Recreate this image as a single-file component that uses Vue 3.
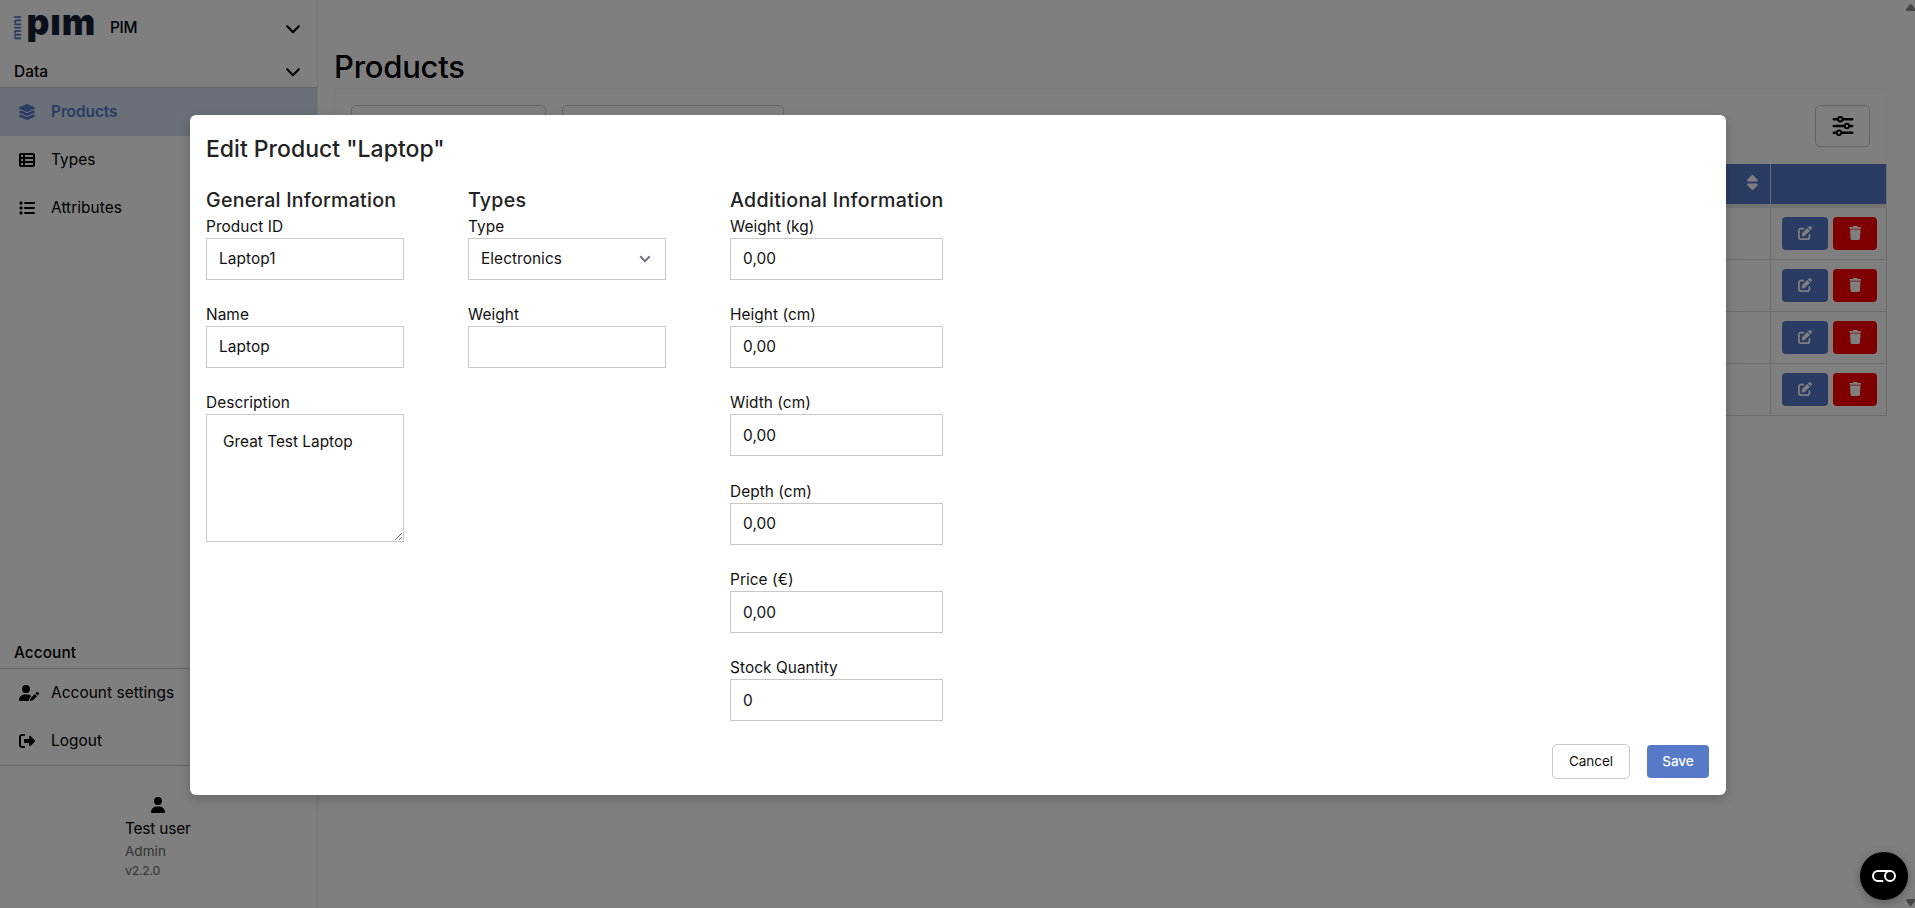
<script setup>
const icons = {
  layers: { box: '32 0 512 512', d: 'M264.5 5.2c14.9-6.9 32.1-6.9 47 0l218.6 101c8.5 3.9 13.9 12.4 13.9 21.8s-5.4 17.9-13.9 21.8l-218.6 101c-14.9 6.9-32.1 6.9-47 0L45.9 149.8C37.4 145.8 32 137.3 32 128s5.4-17.9 13.9-21.8L264.5 5.2zM476.9 209.6l53.2 24.6c8.5 3.9 13.9 12.4 13.9 21.8s-5.4 17.9-13.9 21.8l-218.6 101c-14.9 6.9-32.1 6.9-47 0L45.9 277.8C37.4 273.8 32 265.3 32 256s5.4-17.9 13.9-21.8l53.2-24.6 152 70.2c23.4 10.8 50.4 10.8 73.8 0l152-70.2zM476.9 337.6l53.2 24.6c8.5 3.9 13.9 12.4 13.9 21.8s-5.4 17.9-13.9 21.8l-218.6 101c-14.9 6.9-32.1 6.9-47 0L45.9 405.8C37.4 401.8 32 393.3 32 384s5.4-17.9 13.9-21.8l53.2-24.6 152 70.2c23.4 10.8 50.4 10.8 73.8 0l152-70.2z' },
  table: { box: '0 0 512 512', d: 'M0 96C0 60.7 28.7 32 64 32H448c35.3 0 64 28.7 64 64V416c0 35.3-28.7 64-64 64H64c-35.3 0-64-28.7-64-64V96zm64 0v64h64V96H64zm384 0H192v64H448V96zM64 224v64h64V224H64zm384 0H192v64H448V224zM64 352v64h64V352H64zm384 0H192v64H448V352z' },
  list: { box: '0 0 512 512', d: 'M40 48H88a24 24 0 0 1 24 24v48a24 24 0 0 1-24 24H40a24 24 0 0 1-24-24V72a24 24 0 0 1 24-24zM40 208H88a24 24 0 0 1 24 24v48a24 24 0 0 1-24 24H40a24 24 0 0 1-24-24v-48a24 24 0 0 1 24-24zM40 368H88a24 24 0 0 1 24 24v48a24 24 0 0 1-24 24H40a24 24 0 0 1-24-24v-48a24 24 0 0 1 24-24zM192 64H480a32 32 0 0 1 0 64H192a32 32 0 0 1 0-64zM192 224H480a32 32 0 0 1 0 64H192a32 32 0 0 1 0-64zM192 384H480a32 32 0 0 1 0 64H192a32 32 0 0 1 0-64z' },
  userPen: { box: '0 0 640 512', d: 'M224 256A128 128 0 1 0 224 0a128 128 0 1 0 0 256zm-45.7 48C79.8 304 0 383.8 0 482.3C0 498.7 13.3 512 29.7 512H322.8c-3.1-8.8-3.7-18.4-1.4-27.8l15-60.1c2.8-11.3 8.6-21.5 16.8-29.7l40.3-40.3c-32.1-31-75.7-50.1-123.9-50.1H178.3zm435.5-68.3c-15.6-15.6-40.9-15.6-56.6 0l-29.4 29.4 71 71 29.4-29.4c15.6-15.6 15.6-40.9 0-56.6l-14.4-14.4zM375.9 417c-4.1 4.1-7 9.2-8.4 14.9l-15 60.1c-1.4 5.5 .2 11.2 4.2 15.2s9.7 5.6 15.2 4.2l60.1-15c5.6-1.4 10.8-4.3 14.9-8.4L576.1 358.7l-71-71L375.9 417z' },
  logout: { box: '0 0 512 512', d: 'M377.9 105.9L500.7 228.7c7.2 7.2 11.3 17.1 11.3 27.3s-4.1 20.1-11.3 27.3L377.9 406.1c-6.4 6.4-15 9.9-24 9.9c-18.7 0-33.9-15.2-33.9-33.9l0-62.1-128 0c-17.7 0-32-14.3-32-32l0-64c0-17.7 14.3-32 32-32l128 0 0-62.1c0-18.7 15.2-33.9 33.9-33.9c9 0 17.6 3.6 24 9.9zM160 96L96 96c-17.7 0-32 14.3-32 32l0 256c0 17.7 14.3 32 32 32l64 0c17.7 0 32 14.3 32 32s-14.3 32-32 32l-64 0c-53 0-96-43-96-96L0 128C0 75 43 32 96 32l64 0c17.7 0 32 14.3 32 32s-14.3 32-32 32z' },
}
const dataNav = [
  { label: 'Products', icon: icons.layers, active: true },
  { label: 'Types', icon: icons.table },
  { label: 'Attributes', icon: icons.list },
]
const accountNav = [
  { label: 'Account settings', icon: icons.userPen, wide: true },
  { label: 'Logout', icon: icons.logout },
]
const measures = [
  { label: 'Weight (kg)', value: '0,00' },
  { label: 'Height (cm)', value: '0,00' },
  { label: 'Width (cm)', value: '0,00' },
  { label: 'Depth (cm)', value: '0,00' },
  { label: 'Price (€)', value: '0,00' },
  { label: 'Stock Quantity', value: '0' },
]
</script>

<template>
  <div class="page">
    <aside class="sidebar">
      <div class="brand">
        <span class="logo"><span class="mini">mını</span><span class="pim">pım</span></span>
        <span class="strong app-name">PIM</span>
        <svg class="chev" viewBox="0 0 14 9"><path d="M1.2 1.2 7 7.2 12.8 1.2" /></svg>
      </div>
      <div class="group">
        <span class="strong">Data</span>
        <svg class="chev" viewBox="0 0 14 9"><path d="M1.2 1.2 7 7.2 12.8 1.2" /></svg>
      </div>
      <nav>
        <a v-for="n in dataNav" :key="n.label" class="item" :class="{ active: n.active }">
          <svg class="ico" :viewBox="n.icon.box"><path :d="n.icon.d" /></svg><span>{{ n.label }}</span>
        </a>
      </nav>
      <div class="group account"><span class="strong">Account</span></div>
      <nav class="account-nav">
        <a v-for="n in accountNav" :key="n.label" class="item">
          <svg class="ico" :class="{ wide: n.wide }" :viewBox="n.icon.box"><path :d="n.icon.d" /></svg><span>{{ n.label }}</span>
        </a>
      </nav>
      <div class="user">
        <div class="user-box">
          <svg class="avatar" viewBox="0 0 448 512"><path d="M224 256A128 128 0 1 0 224 0a128 128 0 1 0 0 256zm-45.7 48C79.8 304 0 383.8 0 482.3C0 498.7 13.3 512 29.7 512H418.3c16.4 0 29.7-13.3 29.7-29.7C448 383.8 368.2 304 269.7 304H178.3z" /></svg>
          <span class="uname">Test user</span>
          <span class="role">Admin</span>
          <span class="ver">v2.2.0</span>
        </div>
      </div>
    </aside>

    <main class="main">
      <h1>Products</h1>
      <section class="card">
        <div class="filters">
          <div class="filter first"></div>
          <div class="filter second"></div>
          <button class="tune">
            <svg viewBox="0 0 22 20">
              <g fill="none" stroke="#000" stroke-width="2.6" stroke-linecap="round">
                <path d="M1.8 3.3H20.2M1.8 10H20.2M1.8 16.7H20.2" />
              </g>
              <g fill="#fff" stroke="#000" stroke-width="2">
                <circle cx="8.3" cy="3.3" r="2.2" /><circle cx="14.9" cy="10" r="2.2" /><circle cx="7" cy="16.7" r="2.2" />
              </g>
            </svg>
          </button>
        </div>
        <div class="thead">
          <div class="cell grow">
            <svg class="sort" viewBox="0 0 320 512"><path d="M137.4 41.4c12.5-12.5 32.8-12.5 45.3 0l128 128c9.2 9.2 11.9 22.9 6.9 34.9s-16.6 19.8-29.6 19.8H32c-12.9 0-24.6-7.8-29.6-19.8s-2.2-25.7 6.9-34.9l128-128zm0 429.3l-128-128c-9.2-9.2-11.9-22.9-6.9-34.9s16.6-19.8 29.6-19.8H288c12.9 0 24.6 7.8 29.6 19.8s2.2 25.7-6.9 34.9l-128 128c-12.5 12.5-32.8 12.5-45.3 0z" /></svg>
          </div>
          <div class="cell actions"></div>
        </div>
        <div class="loadbar"></div>
        <div v-for="r in 4" :key="r" class="trow">
          <div class="cell grow"></div>
          <div class="cell actions">
            <button class="act edit"><svg viewBox="0 0 512 512"><path d="M471.6 21.7c-21.9-21.9-57.3-21.9-79.2 0L362.3 51.7l97.9 97.9 30.1-30.1c21.9-21.9 21.9-57.3 0-79.2L471.6 21.7zm-299.2 220c-6.1 6.1-10.8 13.6-13.5 21.9l-29.6 88.8c-2.9 8.6-.6 18.1 5.8 24.6s15.9 8.7 24.6 5.8l88.8-29.6c8.2-2.7 15.7-7.4 21.9-13.5L437.7 172.3 339.7 74.3 172.4 241.7zM96 64C43 64 0 107 0 160V416c0 53 43 96 96 96H352c53 0 96-43 96-96V320c0-17.7-14.3-32-32-32s-32 14.3-32 32v96c0 17.7-14.3 32-32 32H96c-17.7 0-32-14.3-32-32V160c0-17.7 14.3-32 32-32h96c17.7 0 32-14.3 32-32s-14.3-32-32-32H96z" /></svg></button>
            <button class="act del"><svg viewBox="0 0 448 512"><path d="M135.2 17.7L128 32H32C14.3 32 0 46.3 0 64S14.3 96 32 96H416c17.7 0 32-14.3 32-32s-14.3-32-32-32H320l-7.2-14.3C307.4 6.8 296.3 0 284.2 0H163.8c-12.1 0-23.2 6.8-28.6 17.7zM416 128H32L53.2 467c1.6 25.3 22.6 45 47.9 45H346.9c25.3 0 46.3-19.7 47.9-45L416 128z" /></svg></button>
          </div>
        </div>
      </section>
    </main>

    <div class="scrollbar">
      <svg viewBox="0 0 9 7"><path d="M4.5 0C5 0 5.4.3 5.8.8L9 5V7H.4L0 5.4 3.3.8C3.7.3 4.1 0 4.5 0Z" /></svg>
      <svg viewBox="0 0 9 7"><path d="M4.5 7C5 7 5.4 6.7 5.8 6.2L9 2V0H.4L0 1.6 3.3 6.2C3.7 6.7 4.1 7 4.5 7Z" /></svg>
    </div>

    <div class="overlay">
      <form class="modal" @submit.prevent>
        <h2>Edit Product "Laptop"</h2>
        <div class="cols">
          <div class="col">
            <h3>General Information</h3>
            <label class="field"><span>Product ID</span><input value="Laptop1" /></label>
            <label class="field"><span>Name</span><input value="Laptop" /></label>
            <label class="field"><span>Description</span><textarea>Great Test Laptop</textarea></label>
          </div>
          <div class="col">
            <h3>Types</h3>
            <label class="field"><span>Type</span>
              <span class="select"><span>Electronics</span><svg viewBox="0 0 12 8"><path d="M1.2 1.3 6 6.1 10.8 1.3" /></svg></span>
            </label>
            <label class="field"><span>Weight</span><input /></label>
          </div>
          <div class="col third">
            <h3 class="loose">Additional Information</h3>
            <label v-for="m in measures" :key="m.label" class="field"><span>{{ m.label }}</span><input :value="m.value" /></label>
          </div>
        </div>
        <footer>
          <button class="cancel">Cancel</button>
          <button class="save">Save</button>
        </footer>
      </form>
    </div>

    <button class="fab">
      <svg viewBox="0 0 24 12"><path d="M10.5 11H6A5 5 0 0 1 6 1H18" /><circle cx="18" cy="6" r="5" /></svg>
    </button>
  </div>
</template>

<style>
html, body { margin: 0; height: 100%; overflow: hidden; }
</style>
<style scoped>
* { box-sizing: border-box; }
.page { display: flex; width: 1915px; height: 908px; background: #fff; overflow: hidden; position: relative; font-family: Inter, "Noto Sans", sans-serif; font-size: 15.4px; line-height: 24px; letter-spacing: .06px; color: #000; }
button, input, textarea { font: inherit; color: inherit; letter-spacing: inherit; margin: 0; }
.strong { font-weight: 500; }
.app-name { letter-spacing: -.3px; }
.sidebar { width: 318px; border-right: 1px solid #ececec; display: flex; flex-direction: column; }
.brand { height: 56px; padding: 0 17px 0 14px; display: flex; align-items: center; }
.logo { display: flex; flex: none; height: 56px; width: 96px; }
.mini { writing-mode: vertical-rl; transform: rotate(180deg); color: #5679c8; font-weight: 700; font-size: 11.8px; letter-spacing: 0; line-height: 12px; height: 24px; margin-top: 16px; width: 12px; margin-left: -3px; }
.pim { color: #161e33; font-weight: 900; font-size: 35.5px; letter-spacing: .9px; line-height: 56px; margin: -5px 0 0 3.5px; }
.chev { width: 14px; height: 9px; margin: 2px 0 0 auto; fill: none; stroke: #000; stroke-width: 2.1; stroke-linecap: round; stroke-linejoin: round; }
.group { height: 32px; padding: 0 17px 0 14px; display: flex; align-items: center; border-bottom: 1px solid #c8c8c8; }
.item { display: flex; align-items: center; height: 48px; padding-left: 19px; }
.item.active { background: #d5def1; color: #5679c8; font-weight: 600; letter-spacing: -.04px; }
.ico { width: 16px; height: 16px; margin-right: 16px; fill: currentColor; }
.ico.wide { width: 20px; margin-right: 12px; }
.account { margin-top: auto; }
.account-nav { border-bottom: 1px solid #c8c8c8; }
.user { height: 142px; padding: 31px 0 0 125px; }
.user-box { display: flex; flex-direction: column; width: 65px; white-space: nowrap; }
.avatar { width: 14px; height: 16px; align-self: center; }
.uname { margin-top: 4px; letter-spacing: -.18px; }
.role { font-size: 13.5px; line-height: 20px; color: #666; }
.ver { font-size: 12.3px; line-height: 20px; color: #666; letter-spacing: -.25px; }
.main { width: 1569px; padding: 0 0 0 16px; }
h1 { margin: 46px 0 0; height: 42px; font-weight: 500; font-size: 31px; line-height: 41px; letter-spacing: -.25px; }
.card { width: 1553px; border: 1px solid #f7f7f7; border-bottom: 0; }
.filters { height: 75px; padding: 16px 16px 0; display: flex; }
.filter { height: 42px; border: 1px solid #c8c8c8; border-radius: 5px; }
.first { width: 195px; }
.second { width: 222px; margin-left: 16px; }
.tune { margin-left: auto; width: 55px; height: 42px; border: 1px solid #c8c8c8; border-radius: 5px; background: #fff; padding: 0; display: grid; place-items: center; }
.tune svg { width: 22px; height: 20px; }
.thead { height: 40px; display: flex; background: #5679c8; margin-right: -1px; }
.cell { border-right: 1px solid #d8d8d8; }
.grow { flex: 1; display: flex; align-items: center; justify-content: flex-end; padding: 0 12px 3px 0; }
.sort { width: 11px; height: 17px; fill: #fff; }
.loadbar { height: 4px; background: #e6e6e6; }
.trow { height: 52px; display: flex; border-bottom: 1px solid #d8d8d8; margin-right: -1px; }
.actions { width: 116px; display: flex; align-items: center; gap: 5px; padding-left: 11px; }
.act { height: 33px; border: 0; border-radius: 4px; padding: 0; display: grid; place-items: center; }
.act svg { height: 14px; fill: #fff; margin-top: -2px; }
.edit { width: 46px; background: #5679c8; }
.edit svg { width: 14px; }
.del { width: 44px; background: #f00; }
.del svg { width: 12.5px; }
.scrollbar { position: absolute; right: 0; top: 0; width: 9px; height: 908px; padding: 4px 0 2px; display: flex; flex-direction: column; justify-content: space-between; }
.scrollbar svg { width: 9px; height: 7px; fill: #8a8a8a; }
.overlay { position: absolute; inset: 0; background: rgba(0, 0, 0, .5); display: flex; align-items: center; justify-content: center; }
.modal { width: 1536px; height: 680px; margin: 1px 0 0 1px; background: #fff; border-radius: 6px; padding: 16px; display: flex; flex-direction: column; color: #111; box-shadow: 0 4px 12px rgba(0, 0, 0, .2); }
h2 { margin: 0; flex: none; font-size: 23px; line-height: 36px; font-weight: 500; letter-spacing: 0; color: #222; height: 52px; }
h3 { margin: 0; font-size: 19.6px; line-height: 34px; height: 32px; font-weight: 500; letter-spacing: .24px; color: #222; white-space: nowrap; }
h3.loose { letter-spacing: .31px; }
.cols { display: flex; gap: 64px; flex: 1; min-height: 0; }
.col { width: 198px; }
.third { width: 213px; }
.field { display: flex; flex-direction: column; height: 88.4px; }
.field > span:first-child { line-height: 23px; height: 23px; }
input, .select, textarea { height: 42px; border: 1px solid #c8c8c8; background: #fff; padding: 0 12px; width: 100%; outline: 0; border-radius: 0; }
textarea { height: 128px; flex: none; padding: 15px 16px; line-height: 24px; letter-spacing: 0; display: block; }
.select { display: flex; align-items: center; justify-content: space-between; padding: 1px 14px 0 12px; }
.select svg { width: 12px; height: 8px; fill: none; stroke: #6b7280; stroke-width: 2; }
footer { flex: none; display: flex; justify-content: flex-end; align-items: center; gap: 17px; height: 35px; font-size: 13.5px; line-height: 20px; letter-spacing: -.05px; padding-right: 1px; }
.cancel { height: 35px; width: 78px; border: 1px solid #c8c8c8; border-radius: 5px; background: #fff; padding: 0; }
.save { height: 33px; width: 62px; border: 0; border-radius: 4px; background: #5679c8; color: #fff; font-weight: 500; padding: 0; }
.fab { position: absolute; left: 1860px; top: 852px; width: 48px; height: 48px; border: 0; border-radius: 50%; background: #000; padding: 0; display: grid; place-items: center; box-shadow: 0 2px 8px rgba(0, 0, 0, .3); }
.fab svg { width: 24px; height: 12px; fill: none; stroke: #fff; stroke-width: 2; stroke-linecap: round; }
</style>
